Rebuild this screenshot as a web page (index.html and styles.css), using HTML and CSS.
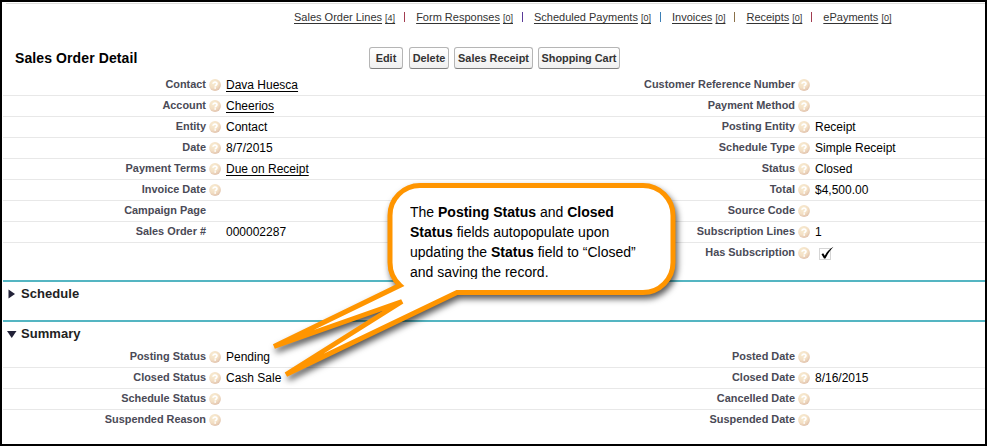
FILE: index.html
```html
<!DOCTYPE html>
<html lang="en">
<head>
<meta charset="utf-8">
<title>Sales Order Detail</title>
<link rel="stylesheet" href="styles.css">
</head>
<body>
<svg class="defs" width="0" height="0" aria-hidden="true">
  <defs>
    <radialGradient id="orb" cx="38%" cy="30%" r="75%">
      <stop offset="0" stop-color="#f8ecd2"/>
      <stop offset=".6" stop-color="#f3dfc4"/>
      <stop offset="1" stop-color="#dfc0ab"/>
    </radialGradient>
    <symbol id="help" viewBox="0 0 12 12">
      <circle cx="6" cy="6" r="5.9" fill="url(#orb)"/>
      <path d="M4 4.800C4 2.500 8 2.600 8 4.800C8 6 6.200 6 6.200 7.400M6.200 8.300V9.700" fill="none" stroke="#fff" stroke-width="1.6"/>
    </symbol>
  </defs>
</svg>
<main class="page">
  <nav class="related">
    <a><u>Sales Order Lines</u> <small>[4]</small></a><i class="red"></i>
    <a><u>Form Responses</u> <small>[0]</small></a><i class="violet"></i>
    <a><u>Scheduled Payments</u> <small>[0]</small></a><i class="blue"></i>
    <a><u>Invoices</u> <small>[0]</small></a><i class="brown"></i>
    <a><u>Receipts</u> <small>[0]</small></a><i class="red"></i>
    <a><u>ePayments</u> <small>[0]</small></a>
  </nav>
  <header class="head">
    <h1>Sales Order Detail</h1>
    <div class="buttons">
      <button class="edit">Edit</button>
      <button class="delete">Delete</button>
      <button class="receipt">Sales Receipt</button>
      <button class="cart">Shopping Cart</button>
    </div>
  </header>
  <section class="fields">
    <div class="row"><b>Contact</b><svg><use href="#help"/></svg><span><u>Dava Huesca</u></span><b>Customer Reference Number</b><svg><use href="#help"/></svg><span></span></div>
    <div class="row"><b>Account</b><svg><use href="#help"/></svg><span><u>Cheerios</u></span><b>Payment Method</b><svg><use href="#help"/></svg><span></span></div>
    <div class="row"><b>Entity</b><svg><use href="#help"/></svg><span>Contact</span><b>Posting Entity</b><svg><use href="#help"/></svg><span>Receipt</span></div>
    <div class="row"><b>Date</b><svg><use href="#help"/></svg><span>8/7/2015</span><b>Schedule Type</b><svg><use href="#help"/></svg><span>Simple Receipt</span></div>
    <div class="row"><b>Payment Terms</b><svg><use href="#help"/></svg><span><u>Due on Receipt</u></span><b>Status</b><svg><use href="#help"/></svg><span>Closed</span></div>
    <div class="row"><b>Invoice Date</b><svg><use href="#help"/></svg><span></span><b>Total</b><svg><use href="#help"/></svg><span>$4,500.00</span></div>
    <div class="row"><b>Campaign Page</b><svg></svg><span></span><b>Source Code</b><svg><use href="#help"/></svg><span></span></div>
    <div class="row"><b>Sales Order #</b><svg></svg><span>000002287</span><b>Subscription Lines</b><svg><use href="#help"/></svg><span>1</span></div>
    <div class="row"><b></b><svg></svg><span></span><b>Has Subscription</b><svg><use href="#help"/></svg><span class="check"><svg viewBox="0 0 16 14"><rect x="1.500" y="2.500" width="11" height="11" fill="none" stroke="#aaa" stroke-dasharray="1 1"/><path d="M3.500 8.300L5.200 7.300L6.800 9.800C9 5.500 11.500 3 15.500 .8C12 4.300 9.800 8 7.400 12.400H6Z" fill="#000"/></svg></span></div>
  </section>
  <section class="group closed">
    <h2><svg viewBox="0 0 10 10"><path d="M1.500 .5L8 5L1.500 9.500Z"/></svg>Schedule</h2>
  </section>
  <section class="group">
    <h2><svg viewBox="0 0 10 10"><path d="M0 2H9.500L4.750 9Z"/></svg>Summary</h2>
    <div class="fields">
      <div class="row"><b>Posting Status</b><svg><use href="#help"/></svg><span>Pending</span><b>Posted Date</b><svg><use href="#help"/></svg><span></span></div>
      <div class="row"><b>Closed Status</b><svg><use href="#help"/></svg><span>Cash Sale</span><b>Closed Date</b><svg><use href="#help"/></svg><span>8/16/2015</span></div>
      <div class="row"><b>Schedule Status</b><svg><use href="#help"/></svg><span></span><b>Cancelled Date</b><svg><use href="#help"/></svg><span></span></div>
      <div class="row"><b>Suspended Reason</b><svg><use href="#help"/></svg><span></span><b>Suspended Date</b><svg><use href="#help"/></svg><span></span></div>
    </div>
  </section>
  <aside class="callout">
    <svg viewBox="260 175 430 215">
      <path d="M420 185.500H643A30 30 0 0 1 673 215.500V262.500A30 30 0 0 1 643 292.500H457L286 374.500L402 301.500L274 346.500L400 285.300C393 279 390 271 390 262.500V215.500A30 30 0 0 1 420 185.500Z"/>
    </svg>
    <p>The <b>Posting Status</b> and <b>Closed<br>Status</b> fields autopopulate upon<br>updating the <b>Status</b> field to “Closed”<br>and saving the record.</p>
  </aside>
</main>
</body>
</html>
```
FILE: styles.css
```css
* { box-sizing: border-box; }
body { margin: 0; font-family: "Liberation Sans", Arial, sans-serif; color: #000; }
.defs { position: absolute; }
.page { position: relative; width: 987px; height: 446px; border: 2px solid #000; background: #fff; padding-left: 1px; overflow: hidden; }
.related { display: flex; align-items: center; height: 27px; margin: 1px 0 0 3px; padding-left: 288px; border-top: 1px solid #dededc; font-size: 11px; color: #333; white-space: nowrap; }
.related small { font-size: 9px; text-decoration: underline; text-underline-offset: 2px; }
.related i { width: 1px; height: 10px; margin: 0 11px 0 9px; }
.red { background: #a23c50; }
.violet { background: #5a3a98; }
.blue { background: #3c7fb5; }
.brown { background: #8a7048; }
.head { display: flex; align-items: center; height: 45px; padding: 11px 0 0 12px; }
h1 { width: 354px; margin: 0; font-size: 14px; line-height: 20px; letter-spacing: .1px; }
.buttons { display: flex; height: 22px; }
button { height: 22px; padding: 0; border: 1px solid #b5b5b5; border-bottom-color: #7f7f7f; border-radius: 3px; background: linear-gradient(#fff, #f0f0f0); color: #333; font: bold 10.9px "Liberation Sans", Arial, sans-serif; white-space: nowrap; }
.edit { width: 34px; margin-right: 6px; }
.delete { width: 40px; margin-right: 5px; }
.receipt { width: 79px; margin-right: 5px; }
.cart { width: 82px; }
.row { display: grid; grid-template-columns: 203px 15px 371px 203px 15px 1fr; height: 21px; border-bottom: 1px solid #e8e8e8; }
.row:last-child { border-bottom-color: transparent; }
.row > b { font-size: 10.92px; line-height: 18px; color: #4a4a56; text-align: right; white-space: nowrap; }
.row > svg { width: 12px; height: 12px; margin: 4px 0 0 3px; }
.row > span { padding-left: 5px; font-size: 12px; line-height: 20px; }
u { text-underline-offset: 2px; }
.row .check { padding: 3px 0 0 8px; line-height: 0; }
.check svg { width: 16px; height: 14px; }
.group { border-top: 2px solid #54b5c2; }
.closed { height: 40px; margin-top: 16px; }
h2 { display: flex; align-items: center; gap: 4px; height: 23px; margin: 0; padding-left: 4px; font-size: 13px; color: #222; letter-spacing: .05px; }
h2 svg { width: 10px; height: 10px; fill: #222238; }
.group .fields { padding-top: 2px; }
.callout > svg { position: absolute; left: 258px; top: 173px; width: 430px; height: 215px; filter: drop-shadow(2px 4px 3px rgba(0,0,0,.65)); }
.callout path { fill: #fff; stroke: #ff9500; stroke-width: 5; stroke-miterlimit: 3; }
.callout p { position: absolute; left: 408px; top: 200px; height: 77px; margin: 0; overflow: hidden; font-size: 14px; line-height: 20px; white-space: nowrap; }
```
